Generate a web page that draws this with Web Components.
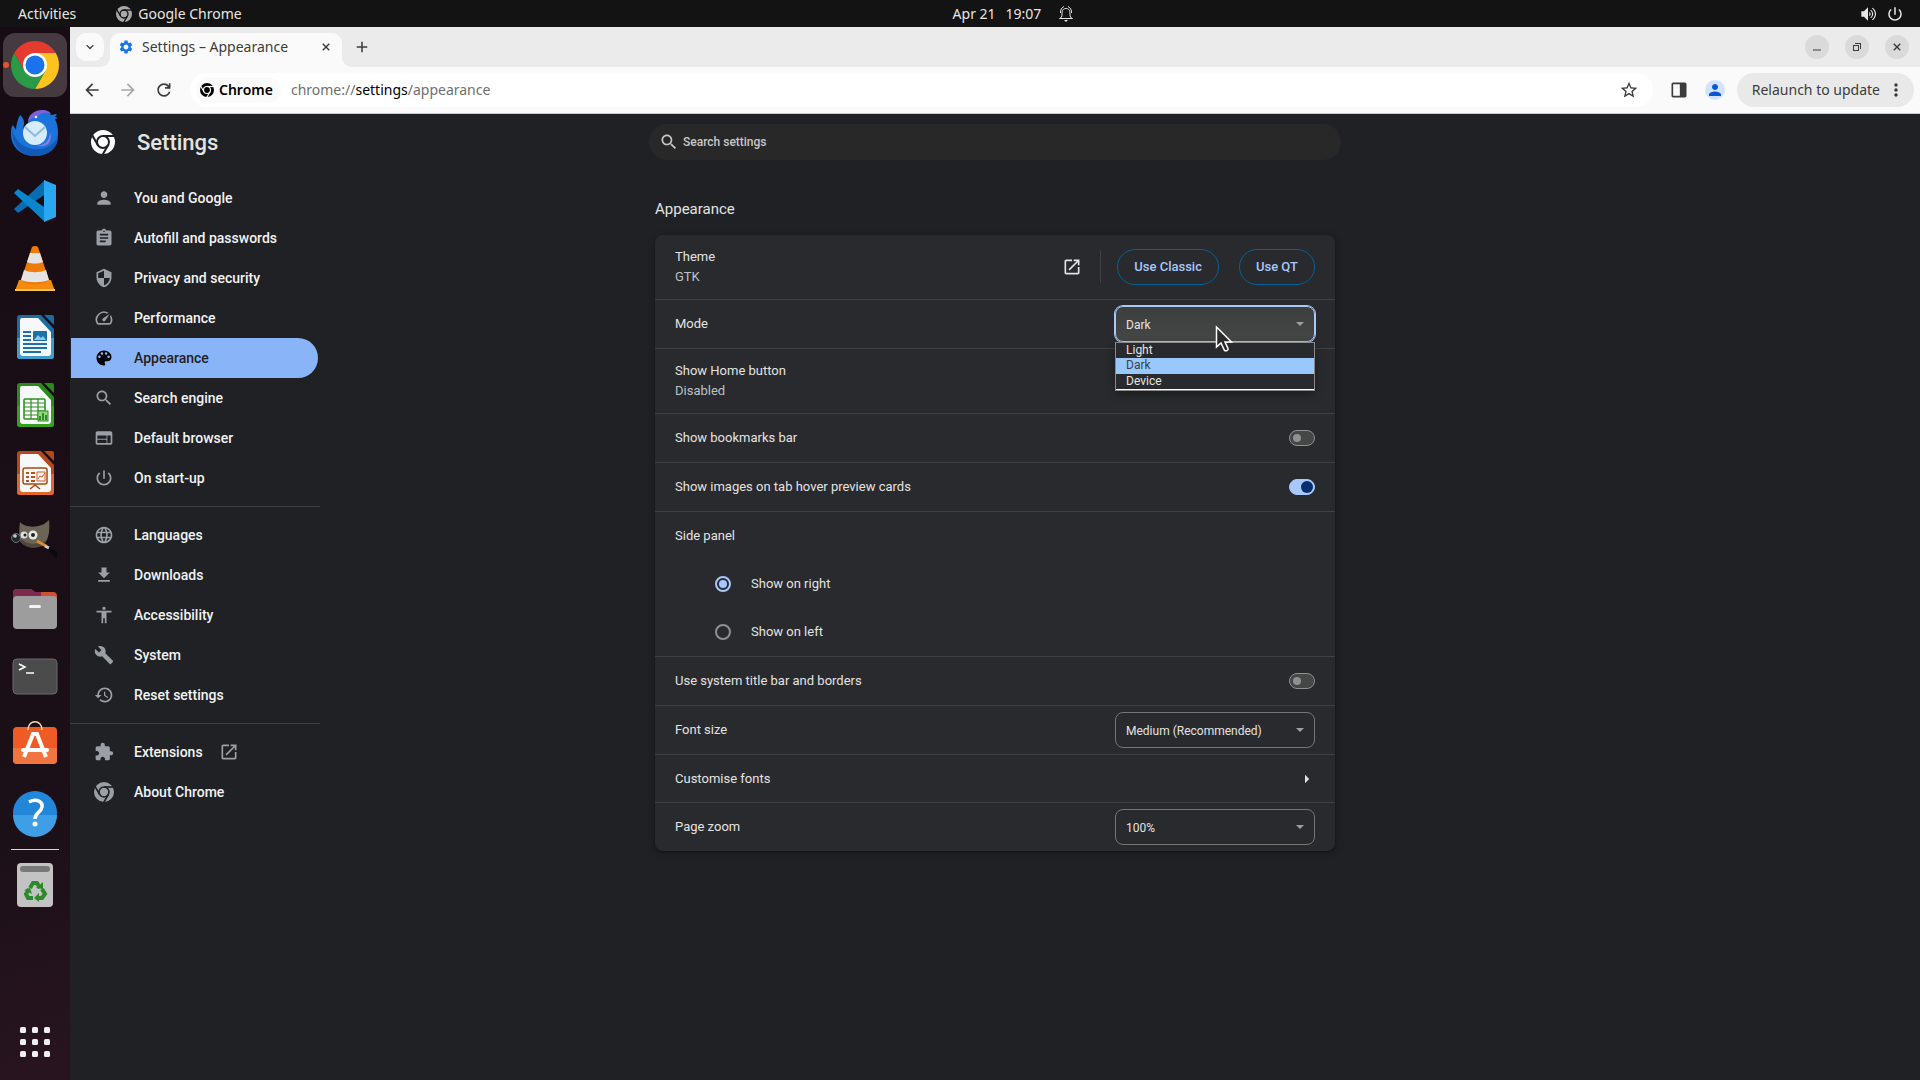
<!DOCTYPE html>
<html lang="en-GB">
<head>
<meta charset="utf-8">
<title>Settings – Appearance</title>
<style>
  body {
    margin: 0;
    min-height: 100vh;
    display: flex;
    flex-direction: column;
    background: #202124;
    --ui-font: "Noto Sans", "Open Sans", sans-serif;
    --page-font: Roboto, "Liberation Sans", sans-serif;
    font-family: var(--ui-font);
  }

  .desktop {
    flex: 1;
    display: flex;
  }

  .window {
    flex: 1;
    min-width: 0;
    display: flex;
    flex-direction: column;
  }

  settings-page {
    flex: 1;
  }
</style>
</head>
<body>
<top-bar></top-bar>
<div class="desktop">
  <app-dock></app-dock>
  <div class="window">
    <tab-strip></tab-strip>
    <nav-bar></nav-bar>
    <settings-page></settings-page>
  </div>
</div>
<mouse-pointer></mouse-pointer>

<script>
const ICONS = {
  person: 'M12 12c2.21 0 4-1.79 4-4s-1.79-4-4-4-4 1.79-4 4 1.79 4 4 4zm0 2c-2.67 0-8 1.34-8 4v2h16v-2c0-2.66-5.33-4-8-4z',
  assignment: 'M19 3h-4.18C14.4 1.84 13.3 1 12 1c-1.3 0-2.4.84-2.82 2H5c-1.1 0-2 .9-2 2v14c0 1.1.9 2 2 2h14c1.1 0 2-.9 2-2V5c0-1.1-.9-2-2-2zm-7 0c.55 0 1 .45 1 1s-.45 1-1 1-1-.45-1-1 .45-1 1-1zm2 14H7v-2h7v2zm3-4H7v-2h10v2zm0-4H7V7h10v2z',
  security: 'M12 1L3 5v6c0 5.55 3.84 10.74 9 12 5.16-1.26 9-6.45 9-12V5l-9-4zm0 10.99h7c-.53 4.12-3.28 7.79-7 8.94V12H5V6.3l7-3.11v8.8z',
  speed: 'M20.38 8.57l-1.23 1.85a8 8 0 0 1-.22 7.58H5.07A8 8 0 0 1 15.58 6.85l1.85-1.23A10 10 0 0 0 3.35 19a2 2 0 0 0 1.72 1h13.85a2 2 0 0 0 1.74-1 10 10 0 0 0-.27-10.44zM10.59 15.41a2 2 0 0 0 2.83 0l5.66-8.49-8.49 5.66a2 2 0 0 0 0 2.83z',
  palette: 'M12 3c-4.97 0-9 4.03-9 9s4.03 9 9 9c.83 0 1.5-.67 1.5-1.5 0-.39-.15-.74-.39-1.01-.23-.26-.38-.61-.38-.99 0-.83.67-1.5 1.5-1.5H16c2.76 0 5-2.24 5-5 0-4.42-4.03-8-9-8zm-5.5 9c-.83 0-1.5-.67-1.5-1.5S5.67 9 6.5 9 8 9.67 8 10.5 7.33 12 6.5 12zm3-4C8.67 8 8 7.33 8 6.5S8.67 5 9.5 5s1.5.67 1.5 1.5S10.33 8 9.5 8zm5 0c-.83 0-1.5-.67-1.5-1.5S13.67 5 14.5 5s1.5.67 1.5 1.5S15.33 8 14.5 8zm3 4c-.83 0-1.5-.67-1.5-1.5S16.67 9 17.5 9s1.5.67 1.5 1.5-.67 1.5-1.5 1.5z',
  search: 'M15.5 14h-.79l-.28-.27C15.41 12.59 16 11.11 16 9.5 16 5.91 13.09 3 9.5 3S3 5.91 3 9.5 5.91 16 9.5 16c1.61 0 3.09-.59 4.23-1.57l.27.28v.79l5 4.99L20.49 19l-4.99-5zm-6 0C7.01 14 5 11.99 5 9.5S7.01 5 9.5 5 14 7.01 14 9.5 11.99 14 9.5 14z',
  web: 'M20 4H4c-1.1 0-1.99.9-1.99 2L2 18c0 1.1.9 2 2 2h16c1.1 0 2-.9 2-2V6c0-1.1-.9-2-2-2zm-5 14H4v-4h11v4zm0-5H4V9h11v4zm5 5h-4V9h4v9z',
  power: 'M13 3h-2v10h2V3zm4.83 2.17l-1.42 1.42C17.99 7.86 19 9.81 19 12c0 3.87-3.13 7-7 7s-7-3.13-7-7c0-2.19 1.01-4.14 2.58-5.42L6.17 5.17C4.23 6.82 3 9.26 3 12c0 4.97 4.03 9 9 9s9-4.03 9-9c0-2.74-1.23-5.18-3.17-6.83z',
  language: 'M11.99 2C6.47 2 2 6.48 2 12s4.47 10 9.99 10C17.52 22 22 17.52 22 12S17.52 2 11.99 2zm6.93 6h-2.95c-.32-1.25-.78-2.45-1.38-3.56 1.84.63 3.37 1.91 4.33 3.56zM12 4.04c.83 1.2 1.48 2.53 1.91 3.96h-3.82c.43-1.43 1.08-2.76 1.91-3.96zM4.26 14C4.1 13.36 4 12.69 4 12s.1-1.36.26-2h3.38c-.08.66-.14 1.32-.14 2 0 .68.06 1.34.14 2H4.26zm.82 2h2.95c.32 1.25.78 2.45 1.38 3.56-1.84-.63-3.37-1.9-4.33-3.56zm2.95-8H5.08c.96-1.66 2.49-2.93 4.33-3.56C8.81 5.55 8.35 6.75 8.03 8zM12 19.96c-.83-1.2-1.48-2.53-1.91-3.96h3.82c-.43 1.43-1.08 2.76-1.91 3.96zM14.34 14H9.66c-.09-.66-.16-1.32-.16-2 0-.68.07-1.35.16-2h4.68c.09.65.16 1.32.16 2 0 .68-.07 1.34-.16 2zm.25 5.56c.6-1.11 1.06-2.31 1.38-3.56h2.95c-.96 1.65-2.49 2.93-4.33 3.56zM16.36 14c.08-.66.14-1.32.14-2 0-.68-.06-1.34-.14-2h3.38c.16.64.26 1.31.26 2s-.1 1.36-.26 2h-3.38z',
  download: 'M19 9h-4V3H9v6H5l7 7 7-7zM5 18v2h14v-2H5z',
  accessibility: 'M12 2c1.1 0 2 .9 2 2s-.9 2-2 2-2-.9-2-2 .9-2 2-2zm9 7h-6v13h-2v-6h-2v6H9V9H3V7h18v2z',
  build: 'M22.7 19l-9.1-9.1c.9-2.3.4-5-1.5-6.9-2-2-5-2.4-7.4-1.3L9 6 6 9 1.6 4.7C.4 7.1.9 10.1 2.9 12.1c1.9 1.9 4.6 2.4 6.9 1.5l9.1 9.1c.4.4 1 .4 1.4 0l2.3-2.3c.5-.4.5-1.1.1-1.4z',
  history: 'M13 3c-4.97 0-9 4.03-9 9H1l3.89 3.89.07.14L9 12H6c0-3.87 3.13-7 7-7s7 3.13 7 7-3.13 7-7 7c-1.93 0-3.68-.79-4.94-2.06l-1.42 1.42C8.27 19.99 10.51 21 13 21c4.97 0 9-4.03 9-9s-4.03-9-9-9zm-1 5v5l4.28 2.54.72-1.21-3.5-2.08V8H12z',
  extension: 'M20.5 11H19V7c0-1.1-.9-2-2-2h-4V3.5C13 2.12 11.88 1 10.5 1S8 2.12 8 3.5V5H4c-1.1 0-1.99.9-1.99 2v3.8H3.5c1.49 0 2.7 1.21 2.7 2.7s-1.21 2.7-2.7 2.7H2V20c0 1.1.9 2 2 2h3.8v-1.5c0-1.49 1.21-2.7 2.7-2.7 1.49 0 2.7 1.21 2.7 2.7V22H17c1.1 0 2-.9 2-2v-4h1.5c1.38 0 2.5-1.12 2.5-2.5S21.88 11 20.5 11z',
  launch: 'M19 19H5V5h7V3H5c-1.11 0-2 .9-2 2v14c0 1.1.89 2 2 2h14c1.1 0 2-.9 2-2v-7h-2v7zM14 3v2h3.59l-9.83 9.83 1.41 1.41L19 6.41V10h2V3h-7z',
  back: 'M20 11H7.83l5.59-5.59L12 4l-8 8 8 8 1.41-1.41L7.83 13H20v-2z',
  forward: 'M4 11h12.17l-5.59-5.59L12 4l8 8-8 8-1.41-1.41L16.17 13H4v-2z',
  reload: 'M12 20c-4.42 0-8-3.58-8-8s3.58-8 8-8c2.3 0 4.4 1 5.8 2.6V4h2v6.5h-6.5v-2h3.3C15.5 6.900 13.900 6 12 6c-3.3 0-6 2.7-6 6s2.7 6 6 6c2.6 0 4.8-1.6 5.65-4h2.1c-.9 3.5-4 6-7.75 6z',
  star: 'M22 9.24l-7.19-.62L12 2 9.19 8.63 2 9.24l5.46 4.73L5.82 21 12 17.27 18.18 21l-1.63-7.03L22 9.24zM12 15.4l-3.76 2.27 1-4.28-3.32-2.88 4.38-.38L12 6.1l1.71 4.04 4.38.38-3.32 2.88 1 4.28L12 15.4z',
  panel: 'M5 3h14c1.1 0 2 .9 2 2v14c0 1.1-.9 2-2 2H5c-1.1 0-2-.9-2-2V5c0-1.1.9-2 2-2zm0 2v14h8V5H5z',
  gear: 'M19.14 12.94c.04-.3.06-.61.06-.94 0-.32-.02-.64-.07-.94l2.03-1.58c.18-.14.23-.41.12-.61l-1.92-3.32c-.12-.22-.37-.29-.59-.22l-2.39.96c-.5-.38-1.03-.7-1.62-.94l-.36-2.54c-.04-.24-.24-.41-.48-.41h-3.84c-.24 0-.43.17-.47.41l-.36 2.54c-.59.24-1.13.57-1.62.94l-2.39-.96c-.22-.08-.47 0-.59.22L2.74 8.87c-.12.21-.08.47.12.61l2.03 1.58c-.05.3-.09.63-.09.94s.02.64.07.94l-2.03 1.58c-.18.14-.23.41-.12.61l1.92 3.32c.12.22.37.29.59.22l2.39-.96c.5.38 1.03.7 1.62.94l.36 2.54c.05.24.24.41.48.41h3.84c.24 0 .44-.17.47-.41l.36-2.54c.59-.24 1.13-.56 1.62-.94l2.39.96c.22.08.47 0 .59-.22l1.92-3.32c.12-.22.07-.47-.12-.61l-2.01-1.58zM12 15.6c-1.98 0-3.6-1.62-3.6-3.6s1.62-3.6 3.6-3.6 3.6 1.62 3.6 3.6-1.62 3.6-3.6 3.6z',
  down: 'M7 8l5 5 5-5 1.600 1.600L12 16.200 5.400 9.600z',
  close: 'M19.500 6.500l-2-2L12 10 6.500 4.500l-2 2L10 12l-5.500 5.500 2 2L12 14l5.500 5.500 2-2L14 12z',
  plus: 'M21 13.300h-7.700V21h-2.600v-7.700H3v-2.600h7.700V3h2.600v7.700H21z',
  minimise: 'M4 17h16v2H4z',
  restore: 'M4 8h12v12H4zM6 10v8h8v-8zM8 4h12v12h-2V6H8z',
  more: 'M12 8c1.1 0 2-.9 2-2s-.9-2-2-2-2 .9-2 2 .9 2 2 2zm0 2c-1.1 0-2 .9-2 2s.9 2 2 2 2-.9 2-2-.9-2-2-2zm0 6c-1.1 0-2 .9-2 2s.9 2 2 2 2-.9 2-2-.9-2-2-2z',
  right: 'M12 7l5 5-5 5z',
  volume: 'M2 8h4l6-6v20l-6-6H2zM14 8.500v7c1.200-.8 2-2 2-3.500s-.8-2.700-2-3.500zM16.500 5.500l-1 1.300a6.500 6.500 0 0 1 0 10.400l1 1.300a8 8 0 0 0 0-13zM19 2.500l-1 1.300a10 10 0 0 1 0 16.400l1 1.300a11.500 11.500 0 0 0 0-19z',
};

// The one-colour Chrome mark: a disc cut by a ring and three tangent lines.
const CHROME_MARK = `
  <mask id="cut">
    <circle cx="12" cy="12" r="12" fill="#fff"/>
    <g fill="none" stroke="#000" stroke-width="2">
      <circle cx="12" cy="12" r="6"/>
      <path d="M12 6h12"/>
      <path d="M12 6h12" transform="rotate(120 12 12)"/>
      <path d="M12 6h12" transform="rotate(240 12 12)"/>
    </g>
  </mask>
  <rect width="24" height="24" mask="url(#cut)"/>`;

class UiIcon extends HTMLElement {
  connectedCallback() {
    const size = this.getAttribute('size') || 20;
    const name = this.getAttribute('name');
    const art = name === 'chrome' ? CHROME_MARK : `<path d="${ICONS[name]}"/>`;
    this.attachShadow({ mode: 'open' }).innerHTML = `
      <style>
        :host { display: block; flex: none; }
        svg { display: block; fill: currentColor; }
      </style>
      <svg width="${size}" height="${size}" viewBox="0 0 24 24" aria-hidden="true">${art}</svg>
    `;
  }
}

class TopBar extends HTMLElement {
  connectedCallback() {
    this.attachShadow({ mode: 'open' }).innerHTML = `
      <style>
        :host {
          display: grid;
          grid-template-columns: 1fr auto 1fr;
          align-items: center;
          height: 27px;
          padding: 0 16px 0 18px;
          background: #131313;
          color: #e6e6e6;
          font-size: 14px;
        }
        div { display: flex; align-items: center; }
        .left { gap: 40px; }
        .app { gap: 6px; }
        .app ui-icon { color: #a9a9a9; }
        .clock { gap: 10px; padding-left: 104px; }
        .clock svg { margin-left: 8px; }
        .right { gap: 10px; justify-content: flex-end; }
      </style>
      <div class="left">
        <span>Activities</span>
        <div class="app"><ui-icon name="chrome" size="16"></ui-icon><span>Google Chrome</span></div>
      </div>
      <div class="clock">
        <span>Apr 21</span><span>19:07</span>
        <svg width="14" height="16" viewBox="0 0 14 16" fill="none" stroke="#e6e6e6">
          <path d="M.5 12.5c2-.5 2.500-2 2.500-4.500C3 4 4.500 2.500 7 2.500S11 4 11 8c0 2.500.5 4 2.500 4.500zM1.500 7C1.300 4 2.500 1.500 5 .6M12.500 7c.2-3-1-5.500-3.500-6.400"/>
          <path d="M5 14h4l-2 2z" fill="#e6e6e6" stroke="none"/>
        </svg>
      </div>
      <div class="right">
        <ui-icon name="volume" size="16"></ui-icon>
        <ui-icon name="power" size="18"></ui-icon>
      </div>
    `;
  }
}

// LibreOffice documents share a page outline and differ in colour and contents.
const officeDoc = (dark, light, art) => `
  <g transform="translate(0 -1)">
    <path d="M10 3h20l13 14v27a3 3 0 0 1-3 3H9a3 3 0 0 1-3-3V6a3 3 0 0 1 3-3z" fill="${dark}"/>
    <path d="M6 26h37v18a3 3 0 0 1-3 3H9a3 3 0 0 1-3-3z" fill="${light}"/>
    <path d="M11 6h16l13 14v21a3 3 0 0 1-3 3H12a3 3 0 0 1-3-3V8a2 2 0 0 1 2-2z" fill="#f7f8f9"/>
    <path d="M33 3h8a2 2 0 0 1 2 2v8z" fill="${dark}"/>
    ${art}
  </g>`;

const DOCK = [
  ['Google Chrome', `
    <path d="M3.220 12A24 24 0 0 1 44.780 12H24L13.610 30z" fill="#e33b2e"/>
    <path d="M44.780 12A24 24 0 0 1 24 48L34.390 30 24 12z" fill="#fcc31e"/>
    <path d="M24 48A24 24 0 0 1 3.220 12L13.610 30 34.390 30z" fill="#2a9a47"/>
    <circle cx="24" cy="24" r="12" fill="#fff"/><circle cx="24" cy="24" r="9.500" fill="#1a73e8"/>`],
  ['Thunderbird', `
    <path d="M9 6c4 3 5 8 3 13l5-5c0-7 6-12 14-12 5 0 8 2 9 4l6-1-2 3 3 1-3 1c2 4 3 9 3 14 0 13-11 23-24 23S0 38 0 25c0-4 0-7 2-9l3 5C5 16 7 10 9 6z" fill="#1a74dc"/>
    <path d="M17 12c1-7 7-11 14-11 5 0 8 2 9 4-7-3-11 0-14 3-3 1-6 1-9 4z" fill="#7d63d8"/>
    <path d="M1 20c3 12 10 18 21 20 11 1 20-3 25-12 0 11-9 19-23 19C10 47 1 37 1 20z" fill="#125bb5"/>
    <path d="M26 37c8-1 13-6 13-14 3 9-2 16-13 14z" fill="#8c7be4"/>
    <circle cx="24" cy="24" r="12" fill="#d6ecfb"/>
    <path d="M14 18l10 9 10-9" fill="none" stroke="#8eb9dd" stroke-width="2"/>
    <circle cx="25" cy="8" r="1.300" fill="#dcefff"/>`],
  ['Visual Studio Code', `
    <path d="M34 3L3 32l4 4 29-20z" fill="#0a6cb0"/>
    <path d="M34 45L3 16l4-4 29 20z" fill="#0b86cd"/>
    <path d="M33 3l12 5v32l-12 5z" fill="#2aa7f2"/>`],
  ['VLC media player', `
    <g transform="translate(0 -1)">
      <path d="M8 36h32l4 11H4z" fill="#f58a0b"/><path d="M4 45h40v2H4z" fill="#ffc45c"/>
      <path d="M21 3q3-2 6 0l11 33c-6 6-22 6-28 0z" fill="#ee7a08"/>
      <path d="M19 9h10l3 9c-5 2-11 2-16 0zM13 26c7 3 15 3 22 0l3 10c-8 3-20 3-28 0z" fill="#e4e4e4"/>
    </g>`],
  ['LibreOffice Writer', officeDoc('#1a6ea3', '#3f9ccd', `
    <g fill="#1a72ab"><path d="M12 19h8v2h-8zM12 23h8v2h-8zM12 27h8v2h-8zM12 31h24v2H12zM12 35h24v2H12zM12 39h18v2H12z"/>
    <rect x="22" y="19" width="14" height="10" rx="1"/></g><path d="M23 28l4-5 3 3 2-2 3 4z" fill="#8cc8ec"/>`)],
  ['LibreOffice Calc', officeDoc('#2a8a1c', '#37a11f', `
    <rect x="13" y="19" width="21" height="20" rx="1" fill="#fff" stroke="#2a8f1e" stroke-width="1.500"/>
    <path d="M13 23h21M13 27h21M13 31h21M13 35h21M20 19v20M27 19v20" stroke="#2a8f1e" stroke-width="1.200"/>
    <rect x="27" y="31" width="10" height="10" fill="#8fdb7c" stroke="#2a8f1e"/><path d="M29 40v-4M32 40v-7M35 40v-5" stroke="#1a6b10" stroke-width="1.500"/>`)],
  ['LibreOffice Impress', officeDoc('#b5491b', '#e2672d', `
    <g fill="none" stroke="#a9480f" stroke-width="1.500"><rect x="12" y="20" width="24" height="16" rx="2"/><path d="M24 36v2M19 41l5-4 5 4"/></g>
    <path d="M15 24h3v2h-3zM20 24h4v2h-4zM15 28h3v2h-3zM20 28h4v2h-4zM15 32h3v2h-3zM20 32h4v2h-4z" fill="#b5521d"/>
    <path d="M26 24h8v9h-8zM27 31l2-3 2 1 3-4" fill="none" stroke="#dd5a20"/>`)],
  ['GIMP', `
    <path d="M9 5c5 6 21 7 29-2 1 11 0 22-8 26-7 3-17 1-21-5-1-6-1-13 0-19z" fill="#6c6557"/>
    <path d="M9 20c5 8 18 9 27 3-2 4-5 6-8 7-7 2-15 0-19-6z" fill="#4e483e"/>
    <circle cx="5" cy="21" r="4.500" fill="#20282c" stroke="#66757a"/><circle cx="4" cy="19" r="1.800" fill="#c5d0d2"/>
    <circle cx="13" cy="18" r="3.500" fill="#ddd"/><circle cx="22" cy="18" r="4.500" fill="#e8e8e8"/>
    <circle cx="14" cy="18" r="1.500" fill="#222"/><circle cx="22" cy="18" r="2" fill="#222"/>
    <path d="M26 24l9 5" stroke="#e08b2e" stroke-width="3"/><path d="M34 29l4 2" stroke="#ccc" stroke-width="3"/><path d="M38 30l8 5v7l-8-8z" fill="#0a0a0a"/>`],
  ['Files', `
    <path d="M2 8a4 4 0 0 1 4-4h14l4 3h18a4 4 0 0 1 4 4v8H2z" fill="#d2502f"/><path d="M2 8a4 4 0 0 1 4-4h14l4 3h6v8H2z" fill="#7d2a4d"/>
    <rect x="2" y="11" width="44" height="33" rx="4" fill="#9d9d9d"/><rect x="18" y="20" width="12" height="3" rx="1.500" fill="#f4f4f4"/>`],
  ['Terminal', `
    <rect x="2" y="6" width="44" height="35" rx="4" fill="#4b4b4b" stroke="#6a6a6a"/>
    <path d="M8 11l6 3-6 3M15 20h8" fill="none" stroke="#fff" stroke-width="1.500"/>`],
  ['Ubuntu Software', `
    <rect x="2" y="6" width="44" height="37" rx="4" fill="#f05a24"/>
    <path d="M2 27h44v12a4 4 0 0 1-4 4H6a4 4 0 0 1-4-4z" fill="#f2753f"/>
    <path d="M17 9c0-11 14-11 14 0" fill="none" stroke="#f7d6b0" stroke-width="1.500"/>
    <path d="M13 36l9-23h4l9 23" fill="none" stroke="#fff" stroke-width="4"/><rect x="10" y="27" width="28" height="4" rx="2" fill="#fff"/>`],
  ['Help', `
    <circle cx="24" cy="24" r="22" fill="#2387d9"/><path d="M2 26a22 22 0 0 0 44 0z" fill="#3e9ee6"/>
    <path d="M18 13c8-4 14 0 13 5-1 6-7 5-7 12" fill="none" stroke="#fff" stroke-width="3.500"/><circle cx="24" cy="35" r="2.500" fill="#fff"/>`],
];

const TRASH = ['Rubbish Bin', `
  <rect x="6" y="1" width="36" height="44" rx="4" fill="#c3c3c3"/><rect x="9" y="4" width="30" height="6" rx="3" fill="#787878"/>
  <g fill="none" stroke="#2c8a2a" stroke-width="4"><path d="M19 26l3-5h4l3 5"/><path d="M31 27l3 5-3 4h-5"/><path d="M22 36h-5l-2-4 3-5"/></g>
  <path d="M25 26l7 1v-7zM28 31v9l-5-4zM13 28l6-2 2 6z" fill="#2c8a2a"/>`];

const APPS = ['Show Applications', `
  <g fill="#f0f0f0">${[9, 21, 33].map((y) => [9, 21, 33].map((x) =>
    `<rect x="${x}" y="${y}" width="6" height="6" rx="1.500"/>`).join('')).join('')}</g>`];

class AppDock extends HTMLElement {
  connectedCallback() {
    const item = ([name, art], className = '') => `
      <button aria-label="${name}" class="${className}">
        <svg width="48" height="48" viewBox="0 0 48 48">${art}</svg>
      </button>`;
    this.attachShadow({ mode: 'open' }).innerHTML = `
      <style>
        :host {
          display: flex;
          flex: none;
          flex-direction: column;
          gap: 4px;
          width: 64px;
          padding: 6px 3px;
          background: linear-gradient(165deg, #170c13 0%, #1b1017 75%, #28141f 100%);
        }
        button {
          position: relative;
          display: grid;
          place-items: center;
          height: 64px;
          padding: 0;
          border: 0;
          border-radius: 12px;
          background: none;
        }
        svg { display: block; }
        .running { background: #443a40; }
        .running::before {
          content: "";
          position: absolute;
          left: 0;
          width: 6px;
          height: 6px;
          border-radius: 50%;
          background: #e95420;
        }
        .apps { margin-top: auto; }
        hr { width: 48px; height: 1px; margin: 0 auto; border: 0; background: #d8d5d6; }
      </style>
      ${DOCK.map((app, i) => item(app, i === 0 ? 'running' : '')).join('')}
      <hr>
      ${item(TRASH)}
      ${item(APPS, 'apps')}
    `;
  }
}

class TabStrip extends HTMLElement {
  connectedCallback() {
    this.attachShadow({ mode: 'open' }).innerHTML = `
      <style>
        :host {
          display: flex;
          align-items: flex-start;
          height: 34px;
          padding: 6px 11px 0 6px;
          background: #ebebeb;
          color: #3c3c3c;
        }
        button {
          display: grid;
          place-items: center;
          padding: 0;
          border: 0;
          background: none;
          color: inherit;
        }
        .list { width: 28px; height: 28px; border-radius: 10px; background: #fafafa; }
        .tab {
          position: relative;
          display: flex;
          align-items: center;
          gap: 8px;
          width: 232px;
          height: 34px;
          margin-left: 6px;
          padding: 0 8px 6px;
          box-sizing: border-box;
          border-radius: 10px 10px 0 0;
          background: #fafafa;
          font-size: 14px;
        }
        .tab::before, .tab::after {
          content: "";
          position: absolute;
          bottom: 0;
          width: 10px;
          height: 10px;
        }
        .tab::before { left: -10px; background: radial-gradient(circle at 0 0, #ebebeb 10px, #fafafa 10px); }
        .tab::after { right: -10px; background: radial-gradient(circle at 100% 0, #ebebeb 10px, #fafafa 10px); }
        .tab span { flex: 1; white-space: nowrap; line-height: 18px; padding-bottom: 1px; }
        .tab button { width: 16px; height: 28px; }
        .gear { color: #1a73e8; }
        .new { width: 28px; height: 28px; margin-left: 6px; }
        .controls { display: flex; gap: 16px; margin-left: auto; padding-top: 2px; }
        .controls button { width: 24px; height: 24px; border-radius: 50%; background: #dadada; }
      </style>
      <button class="list" aria-label="Search tabs"><ui-icon name="down" size="14"></ui-icon></button>
      <div class="tab">
        <ui-icon class="gear" name="gear" size="16"></ui-icon>
        <span>Settings – Appearance</span>
        <button aria-label="Close tab"><ui-icon name="close" size="12"></ui-icon></button>
      </div>
      <button class="new" aria-label="New tab"><ui-icon name="plus" size="14"></ui-icon></button>
      <div class="controls">
        <button aria-label="Minimise"><ui-icon name="minimise" size="12"></ui-icon></button>
        <button aria-label="Restore"><ui-icon name="restore" size="12"></ui-icon></button>
        <button aria-label="Close"><ui-icon name="close" size="12"></ui-icon></button>
      </div>
    `;
  }
}

class NavBar extends HTMLElement {
  connectedCallback() {
    this.attachShadow({ mode: 'open' }).innerHTML = `
      <style>
        :host {
          display: flex;
          align-items: center;
          height: 46px;
          padding: 0 6px 0 12px;
          border-bottom: 1px solid #c4c9c9;
          background: #fafafa;
          color: #3c3c3c;
          font-size: 14px;
          line-height: 18px;
        }
        button {
          display: flex;
          align-items: center;
          padding: 0;
          border: 0;
          background: none;
          color: inherit;
          font: inherit;
        }
        .nav { display: flex; gap: 16px; }
        .off { color: #a8a8a8; }
        .omnibox {
          flex: 1;
          display: flex;
          align-items: center;
          height: 34px;
          margin: 0 16px;
          padding: 0 14px 0 6px;
          border-radius: 17px;
          background: #fff;
        }
        .chip {
          gap: 5px;
          height: 26px;
          padding: 0 8px 0 4px;
          border-radius: 13px;
          background: #fafafa;
          color: #000;
          font-weight: 600;
        }
        .url { flex: 1; margin-left: 10px; padding-bottom: 1px; color: #6f6f6f; }
        .url b { color: #000; font-weight: 400; }
        .avatar {
          justify-content: center;
          width: 20px;
          height: 20px;
          margin: 0 12px 0 16px;
          border-radius: 50%;
          background: #d3e3fd;
          color: #0b57d0;
        }
        .relaunch {
          gap: 6px;
          height: 34px;
          padding: 0 8px 0 15px;
          border-radius: 17px;
          background: #e9e9e9;
        }
      </style>
      <div class="nav">
        <button aria-label="Back"><ui-icon name="back"></ui-icon></button>
        <button aria-label="Forward" class="off"><ui-icon name="forward"></ui-icon></button>
        <button aria-label="Reload"><ui-icon name="reload"></ui-icon></button>
      </div>
      <div class="omnibox">
        <button class="chip"><ui-icon name="chrome" size="14"></ui-icon>Chrome</button>
        <span class="url">chrome://<b>settings</b>/appearance</span>
        <button aria-label="Bookmark this tab"><ui-icon name="star"></ui-icon></button>
      </div>
      <button aria-label="Side panel"><ui-icon name="panel"></ui-icon></button>
      <button aria-label="Profile" class="avatar"><ui-icon name="person" size="18"></ui-icon></button>
      <button class="relaunch">Relaunch to update<ui-icon name="more"></ui-icon></button>
    `;
  }
}

class MenuItem extends HTMLElement {
  connectedCallback() {
    this.attachShadow({ mode: 'open' }).innerHTML = `
      <style>
        :host { display: block; margin: 0 2px 0 1px; }
        a {
          display: flex;
          align-items: center;
          height: 40px;
          padding-left: 23px;
          border-radius: 0 20px 20px 0;
          color: #f1f3f4;
          font-size: 14px;
          font-weight: 500;
          text-decoration: none;
        }
        ui-icon { margin-right: 20px; color: #9aa0a6; }
        .external { margin: 0 0 0 16px; }
        :host([selected]) a { background: #8ab4f8; color: #202124; }
        :host([selected]) ui-icon { color: #000; }
      </style>
      <a href="#">
        <ui-icon name="${this.getAttribute('icon')}"></ui-icon><slot></slot>
        ${this.hasAttribute('external') ? '<ui-icon class="external" name="launch"></ui-icon>' : ''}
      </a>
    `;
  }
}

class SettingsMenu extends HTMLElement {
  connectedCallback() {
    this.attachShadow({ mode: 'open' }).innerHTML = `
      <style>
        :host { display: block; width: 250px; padding-top: 8px; }
        hr { height: 1px; margin: 8px 0; border: 0; background: #3c4043; }
      </style>
      <nav>
        <menu-item icon="person">You and Google</menu-item>
        <menu-item icon="assignment">Autofill and passwords</menu-item>
        <menu-item icon="security">Privacy and security</menu-item>
        <menu-item icon="speed">Performance</menu-item>
        <menu-item icon="palette" selected>Appearance</menu-item>
        <menu-item icon="search">Search engine</menu-item>
        <menu-item icon="web">Default browser</menu-item>
        <menu-item icon="power">On start-up</menu-item>
        <hr>
        <menu-item icon="language">Languages</menu-item>
        <menu-item icon="download">Downloads</menu-item>
        <menu-item icon="accessibility">Accessibility</menu-item>
        <menu-item icon="build">System</menu-item>
        <menu-item icon="history">Reset settings</menu-item>
        <hr>
        <menu-item icon="extension" external>Extensions</menu-item>
        <menu-item icon="chrome">About Chrome</menu-item>
      </nav>
    `;
  }
}

const ROW_STYLE = `
  :host {
    display: flex;
    align-items: center;
    box-sizing: border-box;
    min-height: 49px;
    padding: 0 20px;
    border-top: 1px solid #3f4042;
    color: #e3e3e3;
    font-size: 13px;
    line-height: 20px;
  }
  :host(:first-child) { border-top: 0; }
  .text { flex: 1; }
  .sub { color: #bdc1c6; }
`;

// Plain row: label, optional second line, slotted controls at the end.
class SettingsRow extends HTMLElement {
  connectedCallback() {
    const sub = this.getAttribute('sub');
    this.attachShadow({ mode: 'open' }).innerHTML = `
      <style>
        ${ROW_STYLE}
        :host([sub]) { min-height: 64px; }
      </style>
      <div class="text">${this.getAttribute('label')}${sub ? `<div class="sub">${sub}</div>` : ''}</div>
      <slot></slot>
    `;
  }
}

class ToggleRow extends HTMLElement {
  connectedCallback() {
    this.attachShadow({ mode: 'open' }).innerHTML = `
      <style>
        ${ROW_STYLE}
        input {
          appearance: none;
          display: flex;
          align-items: center;
          box-sizing: border-box;
          width: 26px;
          height: 16px;
          margin: 0;
          padding: 0 3px;
          border: 1px solid #8e918f;
          border-radius: 8px;
          background: #444746;
        }
        input::before {
          content: "";
          width: 8px;
          height: 8px;
          border-radius: 50%;
          background: #8e918f;
        }
        input:checked { justify-content: flex-end; padding: 0 1px; border-color: #a8c7fa; background: #a8c7fa; }
        input:checked::before { width: 12px; height: 12px; background: #062e6f; }
      </style>
      <label class="text" for="toggle">${this.getAttribute('label')}</label>
      <input id="toggle" type="checkbox" ${this.hasAttribute('checked') ? 'checked' : ''}>
    `;
  }
}

class SelectRow extends HTMLElement {
  connectedCallback() {
    const options = this.getAttribute('options').split('|');
    const value = this.getAttribute('value');
    const list = this.hasAttribute('open') ? `
      <ul role="listbox">
        ${options.map((o) => `<li role="option" aria-selected="${o === value}">${o}</li>`).join('')}
      </ul>` : '';
    this.attachShadow({ mode: 'open' }).innerHTML = `
      <style>
        ${ROW_STYLE}
        .box { position: relative; }
        select {
          appearance: none;
          display: block;
          box-sizing: border-box;
          width: 200px;
          height: 36px;
          padding: 2px 10px 0;
          border: 1px solid #757775;
          border-radius: 8px;
          background: transparent;
          color: #e3e3e3;
          font: 12px var(--page-font);
        }
        .box::after {
          content: "";
          position: absolute;
          top: 16px;
          right: 11px;
          border: 4px solid transparent;
          border-top-color: #9aa0a6;
          border-bottom: 0;
        }
        :host([open]) select {
          border-color: #a8c7fa;
          background: linear-gradient(#3d3e3e, #454646);
          box-shadow: 0 0 0 1px #a8c7fa;
        }
        ul {
          position: absolute;
          top: 36px;
          left: 0;
          right: 0;
          z-index: 1;
          margin: 0;
          padding: 0 0 1px;
          list-style: none;
          border: 1px solid #8a8a8a;
          background: #292a2d;
          box-shadow: inset 0 -1px #fff, 0 3px 8px rgba(0, 0, 0, .35);
          font-size: 12px;
          line-height: 15px;
        }
        li { height: 15px; padding: 0 10px; }
        li[aria-selected="true"] { height: 16px; background: #99c8ff; color: #3c4043; }
      </style>
      <label class="text" for="choice">${this.getAttribute('label')}</label>
      <div class="box">
        <select id="choice">
          ${options.map((o) => `<option ${o === value ? 'selected' : ''}>${o}</option>`).join('')}
        </select>
        ${list}
      </div>
    `;
  }
}

class RadioRow extends HTMLElement {
  connectedCallback() {
    const value = this.getAttribute('value');
    this.attachShadow({ mode: 'open' }).innerHTML = `
      <style>
        ${ROW_STYLE}
        :host { display: block; }
        fieldset { margin: 0; padding: 0; border: 0; }
        legend { padding: 14px 0; }
        label { display: flex; align-items: center; gap: 20px; height: 48px; padding-left: 40px; }
        input {
          appearance: none;
          display: grid;
          place-items: center;
          box-sizing: border-box;
          width: 16px;
          height: 16px;
          margin: 0;
          border: 2px solid #8e918f;
          border-radius: 50%;
        }
        input:checked { border-color: #a8c7fa; }
        input:checked::before {
          content: "";
          width: 8px;
          height: 8px;
          border-radius: 50%;
          background: #a8c7fa;
        }
      </style>
      <fieldset>
        <legend>${this.getAttribute('label')}</legend>
        ${this.getAttribute('options').split('|').map((o) => `
          <label><input type="radio" name="choice" ${o === value ? 'checked' : ''}>${o}</label>`).join('')}
      </fieldset>
    `;
  }
}

class SettingsPage extends HTMLElement {
  connectedCallback() {
    this.attachShadow({ mode: 'open' }).innerHTML = `
      <style>
        :host {
          display: block;
          background: #202124;
          color: #e3e3e3;
          font-family: var(--page-font);
        }
        header, .body {
          display: grid;
          grid-template-columns: minmax(250px, 1fr) minmax(0, 680px) 1fr;
        }
        header { align-items: center; height: 56px; }
        .brand { display: flex; align-items: center; gap: 22px; padding-left: 21px; color: #fff; }
        h1 { margin: 0; color: #e3e3e3; font-size: 22px; font-weight: 500; }
        .search {
          display: flex;
          align-items: center;
          gap: 4px;
          height: 36px;
          margin: 0 -6px;
          padding: 0 10px;
          border-radius: 18px;
          background: #282828;
          color: #c7c7c7;
        }
        .search input {
          flex: 1;
          padding: 0;
          border: 0;
          background: none;
          color: inherit;
          font: 500 12px var(--page-font);
        }
        .search input::placeholder { color: #c7c7c7; }
        h2 { margin: 28px 0 14px; font-size: 15px; font-weight: 400; line-height: 23px; }
        .card {
          border-radius: 8px;
          background: #292a2d;
          box-shadow: 0 1px 2px rgba(0, 0, 0, .3), 0 2px 6px 2px rgba(0, 0, 0, .15);
        }
        button { font: 500 13px var(--page-font); }
        .icon { padding: 0; border: 0; background: none; color: #e3e3e3; }
        .line { width: 1px; height: 32px; margin: 0 16px 0 18px; background: #3f4042; }
        .outline {
          height: 36px;
          padding: 0 16px 2px;
          border: 1px solid #04629a;
          border-radius: 18px;
          background: none;
          color: #a8c7fa;
        }
        .outline + .outline { margin-left: 20px; }
        .compact { min-height: 48px; }
        .home { min-height: 65px; }
      </style>
      <header>
        <div class="brand"><ui-icon name="chrome" size="24"></ui-icon><h1>Settings</h1></div>
        <div class="search">
          <ui-icon name="search"></ui-icon>
          <input type="search" placeholder="Search settings" aria-label="Search settings">
        </div>
      </header>
      <div class="body">
        <settings-menu></settings-menu>
        <main>
          <h2>Appearance</h2>
          <div class="card">
            <settings-row label="Theme" sub="GTK">
              <button class="icon" aria-label="Open theme store"><ui-icon name="launch"></ui-icon></button>
              <span class="line"></span>
              <button class="outline">Use Classic</button>
              <button class="outline">Use QT</button>
            </settings-row>
            <select-row label="Mode" options="Light|Dark|Device" value="Dark" open></select-row>
            <settings-row class="home" label="Show Home button" sub="Disabled"></settings-row>
            <toggle-row label="Show bookmarks bar"></toggle-row>
            <toggle-row label="Show images on tab hover preview cards" checked></toggle-row>
            <radio-row label="Side panel" options="Show on right|Show on left" value="Show on right"></radio-row>
            <toggle-row label="Use system title bar and borders"></toggle-row>
            <select-row label="Font size" options="Medium (Recommended)" value="Medium (Recommended)"></select-row>
            <settings-row class="compact" label="Customise fonts">
              <button class="icon" aria-label="Customise fonts"><ui-icon name="right"></ui-icon></button>
            </settings-row>
            <select-row label="Page zoom" options="100%" value="100%"></select-row>
          </div>
        </main>
      </div>
    `;
  }
}

class MousePointer extends HTMLElement {
  connectedCallback() {
    this.attachShadow({ mode: 'open' }).innerHTML = `
      <style>
        :host { position: absolute; left: 1215px; top: 325px; z-index: 2; pointer-events: none; }
        svg { display: block; }
      </style>
      <svg width="18" height="28" viewBox="0 0 18 28">
        <path d="M1.500 2v20l4.500-4 3.500 7.500c2 1 4-.5 3.500-2L10 17h6.500z" fill="#2b2b2b" stroke="#fff" stroke-width="1.500"/>
      </svg>
    `;
  }
}

customElements.define('ui-icon', UiIcon);
customElements.define('top-bar', TopBar);
customElements.define('app-dock', AppDock);
customElements.define('tab-strip', TabStrip);
customElements.define('nav-bar', NavBar);
customElements.define('menu-item', MenuItem);
customElements.define('settings-menu', SettingsMenu);
customElements.define('settings-row', SettingsRow);
customElements.define('toggle-row', ToggleRow);
customElements.define('select-row', SelectRow);
customElements.define('radio-row', RadioRow);
customElements.define('settings-page', SettingsPage);
customElements.define('mouse-pointer', MousePointer);
</script>
</body>
</html>
